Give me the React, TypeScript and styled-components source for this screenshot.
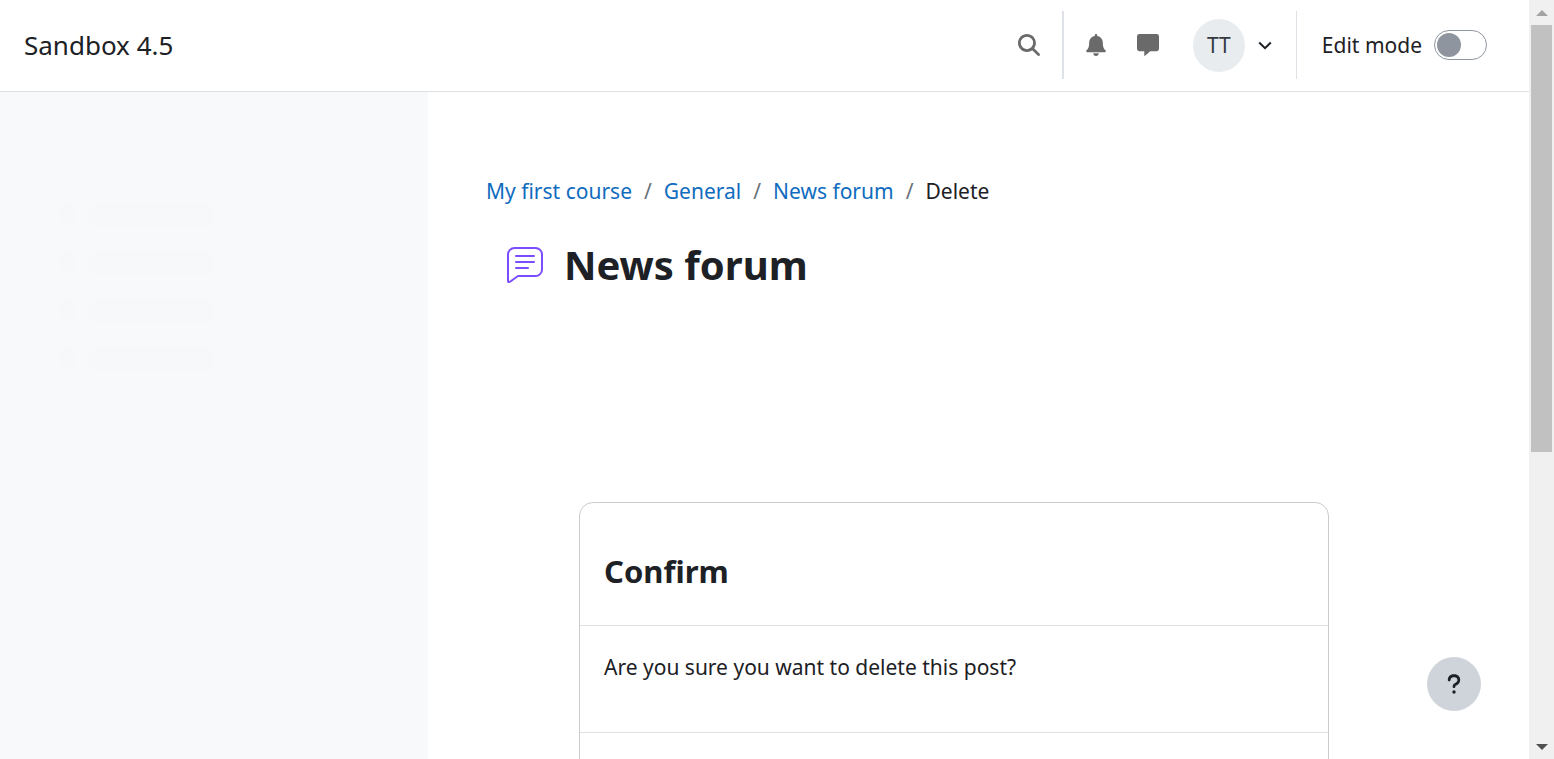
import React from "react";
import styled, { createGlobalStyle } from "styled-components";
import { FaMagnifyingGlass, FaQuestion } from "react-icons/fa6";

const GlobalStyle = createGlobalStyle`
  *, *::before, *::after { box-sizing: border-box; }
  body {
    margin: 0;
    background: #fff;
    color: #1d2125;
    font-family: "Segoe UI", "Noto Sans", "Open Sans", sans-serif;
    font-size: 21px;
    line-height: 34px;
  }
  button { font: inherit; color: inherit; border: 0; background: none; padding: 0; cursor: pointer; }
`;

const Viewport = styled.div`
  display: grid;
  grid-template-columns: minmax(0, 1fr) 25px;
  height: 100vh;
  overflow: hidden;
`;

const Page = styled.div`
  position: relative;
  display: flex;
  flex-direction: column;
  min-height: 0;
  overflow: hidden;
`;

const Header = styled.header`
  display: flex;
  flex: none;
  align-items: center;
  justify-content: space-between;
  height: 92px;
  padding: 0 42px 1px 24px;
  border-bottom: 1px solid #dee2e6;
`;

const Brand = styled.a`
  color: #1d2125;
  font-size: 26px;
  line-height: 36px;
  text-decoration: none;
`;

const Tools = styled.div`
  display: flex;
  align-items: center;
`;

const Divider = styled.div<{ $thick?: boolean }>`
  width: ${(p) => (p.$thick ? 2 : 1)}px;
  height: 68px;
  background: #dee2e6;
`;

const IconButton = styled.button`
  display: flex;
  align-items: center;
  justify-content: center;
  width: 52px;
  height: 68px;
  color: #6a6a6a;
  font-size: 22px;
`;

const SearchButton = styled(IconButton)`
  width: 66px;
`;

const IconGroup = styled.div`
  display: flex;
  padding-left: 6px;
`;

const UserMenu = styled.button`
  display: flex;
  align-items: center;
  gap: 13px;
  margin: 0 24px 0 19px;
`;

const Avatar = styled.span`
  display: flex;
  align-items: center;
  justify-content: center;
  width: 52px;
  height: 53px;
  border-radius: 50%;
  background: #e9ecef;
  color: #343a40;
`;

const EditMode = styled.label`
  display: flex;
  align-items: center;
  gap: 12px;
  padding-left: 25px;
`;

const Switch = styled.input`
  appearance: none;
  display: flex;
  align-items: center;
  width: 53px;
  height: 30px;
  margin: 0;
  padding: 0 2px;
  border: 1px solid #8f959e;
  border-radius: 15px;
  background: #fff;
  &::before {
    content: "";
    width: 24px;
    height: 24px;
    border-radius: 50%;
    background: #8f959e;
  }
  &:checked { justify-content: flex-end; }
`;

const Body = styled.div`
  display: flex;
  flex: 1;
  min-height: 0;
`;

const Drawer = styled.aside`
  flex: none;
  width: 428px;
  padding: 110px 58px;
  background: #f8f9fb;
`;

const Placeholders = styled.ul`
  display: flex;
  flex-direction: column;
  gap: 24px;
  margin: 0;
  padding: 0;
  list-style: none;
`;

const PlaceholderRow = styled.li`
  display: flex;
  gap: 12px;
`;

const PlaceholderShape = styled.span<{ $round?: boolean }>`
  width: ${(p) => (p.$round ? 19 : 125)}px;
  height: 24px;
  border-radius: ${(p) => (p.$round ? "50%" : "0")};
  background: #f7f8fa;
`;

const Main = styled.main`
  flex: 1;
  min-width: 0;
  padding: 82px 107px 0 58px;
`;

const Crumbs = styled.ol`
  display: flex;
  margin: 0;
  padding: 0;
  list-style: none;
`;

const Crumb = styled.li`
  & + &::before {
    content: "/";
    padding: 0 12px;
    color: #6a737b;
  }
`;

const CrumbLink = styled.a`
  color: #0f6cbf;
  text-decoration: none;
`;

const TitleRow = styled.div`
  display: flex;
  align-items: center;
  gap: 21px;
  height: 54px;
  margin-top: 30px;
  padding-left: 21px;
`;

const Title = styled.h1`
  margin: 0;
  font-size: 40px;
  font-weight: 700;
  line-height: 54px;
`;

const Dialog = styled.section`
  max-width: 750px;
  margin: 210px auto 0;
  border: 1px solid #cacbcd;
  border-radius: 14px 14px 0 0;
`;

const DialogHeader = styled.div`
  padding: 48px 24px 34px;
  border-bottom: 1px solid #dee2e6;
`;

const DialogTitle = styled.h2`
  margin: 0;
  font-size: 31px;
  font-weight: 700;
  line-height: 40px;
`;

const DialogBody = styled.div`
  padding: 24px 24px 48px;
  border-bottom: 1px solid #dee2e6;
  p { margin: 0; }
`;

const DialogFooter = styled.div`
  height: 90px;
`;

const HelpButton = styled.button`
  position: absolute;
  right: 48px;
  bottom: 48px;
  display: flex;
  align-items: center;
  justify-content: center;
  width: 54px;
  height: 54px;
  border-radius: 50%;
  background: #ced4da;
  font-size: 22px;
`;

const ScrollTrack = styled.div`
  display: flex;
  flex-direction: column;
  align-items: center;
  background: #f0f0f0;
`;

const ScrollArrow = styled.div<{ $down?: boolean }>`
  display: flex;
  align-items: center;
  justify-content: center;
  flex: none;
  height: 25px;
  margin-top: ${(p) => (p.$down ? "auto" : "0")};
`;

const ScrollThumb = styled.div`
  width: 21px;
  height: 60%;
  max-height: 427px;
  background: #c1c1c1;
`;

const crumbs = ["My first course", "General", "News forum"];

function ForumIcon() {
  return (
    <svg width="36" height="36" viewBox="0 0 36 36" fill="none" stroke="#7b4dff" strokeWidth="2" strokeLinecap="round" strokeLinejoin="round" aria-hidden="true">
      <path d="M7.5 1H28.5A6.5 6.5 0 0 1 35 7.5V22.5A6.5 6.5 0 0 1 28.5 29H11L3 34.7Q1 35.8 1 33.7V7.5A6.5 6.5 0 0 1 7.5 1Z" />
      <path d="M9 9H27M9 15H27M9 21H21" />
    </svg>
  );
}

function BellIcon() {
  return (
    <svg width="20" height="22" viewBox="0 0 20 22" fill="currentColor" aria-hidden="true">
      <path d="M10 0C9.3 0 8.8.5 8.8 1.2V1.9C5.4 2.5 3.2 5.1 3.2 8.4C3.2 12.6 2.4 14.4.6 16.3C-.3 17.3.2 18.2 1.2 18.2H18.8C19.8 18.2 20.3 17.3 19.4 16.3C17.6 14.4 16.8 12.6 16.8 8.4C16.8 5.1 14.6 2.5 11.2 1.9V1.2C11.2.5 10.7 0 10 0Z" />
      <path d="M7.2 19.3H12.8C12.8 20.8 11.5 22 10 22S7.2 20.8 7.2 19.3Z" />
    </svg>
  );
}

function MessageIcon() {
  return (
    <svg width="22" height="22" viewBox="0 0 22 22" fill="currentColor" aria-hidden="true">
      <path d="M2.4 0H19.6A2.4 2.4 0 0 1 22 2.4V14.8A2.4 2.4 0 0 1 19.6 17.2H13.2L8 21.7Q7.3 22.2 7.3 21.3V17.2H2.4A2.4 2.4 0 0 1 0 14.8V2.4A2.4 2.4 0 0 1 2.4 0Z" />
    </svg>
  );
}

export default function App() {
  return (
    <>
      <GlobalStyle />
      <Viewport>
        <Page>
          <Header>
            <Brand href="#">Sandbox 4.5</Brand>
            <Tools>
              <SearchButton aria-label="Search"><FaMagnifyingGlass /></SearchButton>
              <Divider $thick />
              <IconGroup>
                <IconButton aria-label="Notifications"><BellIcon /></IconButton>
                <IconButton aria-label="Messages"><MessageIcon /></IconButton>
              </IconGroup>
              <UserMenu aria-label="User menu">
                <Avatar>TT</Avatar>
                <svg width="14" height="9" viewBox="0 0 14 9" fill="none" stroke="#1d2125" strokeWidth="2" aria-hidden="true">
                  <path d="M1.2 1.5L7 7.2L12.8 1.5" />
                </svg>
              </UserMenu>
              <Divider />
              <EditMode>
                Edit mode
                <Switch type="checkbox" role="switch" />
              </EditMode>
            </Tools>
          </Header>
          <Body>
            <Drawer aria-label="Course index">
              <Placeholders>
                {[0, 1, 2, 3].map((n) => (
                  <PlaceholderRow key={n}>
                    <PlaceholderShape $round />
                    <PlaceholderShape />
                  </PlaceholderRow>
                ))}
              </Placeholders>
            </Drawer>
            <Main>
              <nav aria-label="Breadcrumb">
                <Crumbs>
                  {crumbs.map((label) => (
                    <Crumb key={label}><CrumbLink href="#">{label}</CrumbLink></Crumb>
                  ))}
                  <Crumb aria-current="page">Delete</Crumb>
                </Crumbs>
              </nav>
              <TitleRow>
                <ForumIcon />
                <Title>News forum</Title>
              </TitleRow>
              <Dialog aria-labelledby="confirm-title">
                <DialogHeader>
                  <DialogTitle id="confirm-title">Confirm</DialogTitle>
                </DialogHeader>
                <DialogBody>
                  <p>Are you sure you want to delete this post?</p>
                </DialogBody>
                <DialogFooter />
              </Dialog>
            </Main>
          </Body>
          <HelpButton aria-label="Help"><FaQuestion /></HelpButton>
        </Page>
        <ScrollTrack aria-hidden="true">
          <ScrollArrow>
            <svg width="12" height="6" viewBox="0 0 12 6"><path d="M0 6L6 0L12 6Z" fill="#a3a3a3" /></svg>
          </ScrollArrow>
          <ScrollThumb />
          <ScrollArrow $down>
            <svg width="12" height="6" viewBox="0 0 12 6"><path d="M0 0L6 6L12 0Z" fill="#505050" /></svg>
          </ScrollArrow>
        </ScrollTrack>
      </Viewport>
    </>
  );
}
